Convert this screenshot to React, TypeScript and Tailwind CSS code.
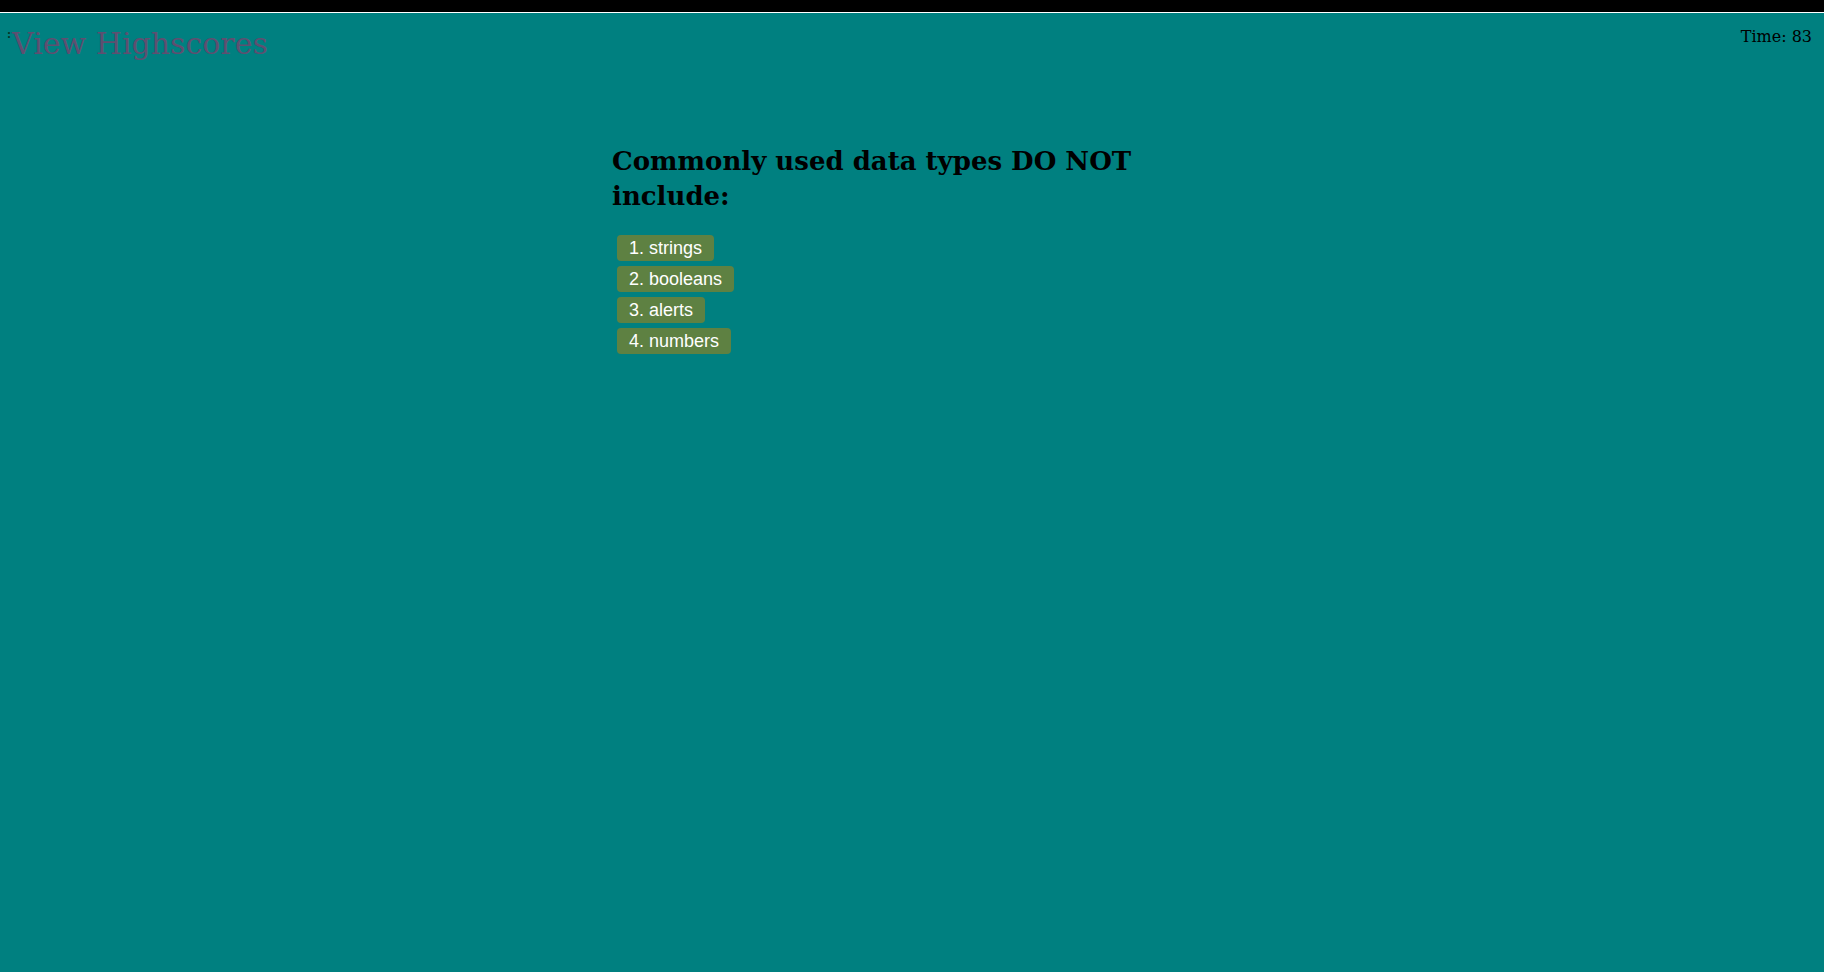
import React from "react";

const choices = ["1. strings", "2. booleans", "3. alerts", "4. numbers"];

export default function App() {
  return (
    <div className="min-h-screen w-full bg-[#008080] flex flex-col font-['DejaVu_Serif',serif]">
      {/* Top strip */}
      <div className="h-[12px] bg-black" />
      <div className="h-px bg-white" />

      {/* Header */}
      <header className="flex justify-between items-start">
        <div className="flex items-start pl-[7px] pt-[13px]">
          <span className="text-[11px] leading-[12px] text-[#06301f] font-bold mt-[3px]">:</span>
          <a className="text-[30px] leading-[35px] text-[#5e4f70] ml-[1px] cursor-pointer">View Highscores</a>
        </div>
        <div className="pt-[14px] pr-[12px] text-[16px] leading-[20px] text-black">Time: 83</div>
      </header>

      {/* Question */}
      <main className="mx-auto w-[600px] mt-[83px]">
        <h2 className="text-[26px] leading-[35px] font-bold text-black">
          Commonly used data types DO NOT include:
        </h2>
        <ul className="mt-[21px] flex flex-col gap-[5px] items-start pl-[5px]">
          {choices.map((c) => (
            <li key={c}>
              <button className="h-[26px] px-3 flex items-center rounded-[4px] bg-[#5e8142] text-white text-[18px] font-['Liberation_Sans',Arial,sans-serif]">
                {c}
              </button>
            </li>
          ))}
        </ul>
      </main>
    </div>
  );
}
